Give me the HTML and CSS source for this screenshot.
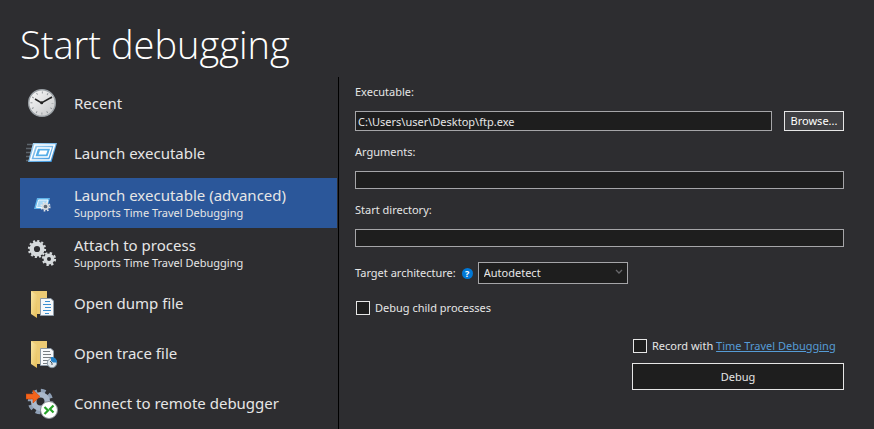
FILE: index.html
```html
<!DOCTYPE html>
<html lang="en">
<head>
<meta charset="utf-8">
<meta name="viewport" content="width=device-width, initial-scale=1">
<title>Start debugging</title>
<link rel="stylesheet" href="styles.css">
</head>
<body>
<svg class="defs" aria-hidden="true">
  <defs>
    <linearGradient id="face" x1="0" y1="0" x2="1" y2="1"><stop offset="0" stop-color="#fafafa"/><stop offset="1" stop-color="#c4c6c8"/></linearGradient>
    <linearGradient id="pane" x1="0" y1="0" x2="1" y2="1"><stop offset="0" stop-color="#b4dcf5"/><stop offset="1" stop-color="#2d8ddb"/></linearGradient>
    <linearGradient id="fold" x1="0" y1="0" x2="1" y2="1"><stop offset="0" stop-color="#fbe7a6"/><stop offset="1" stop-color="#e6bd58"/></linearGradient>
    <g id="folder">
      <path d="M5 4H21V27H9Z" fill="#edcb74"/>
      <path d="M5 4L11 8V31L5 27Z" fill="url(#fold)"/>
    </g>
    <path id="page" d="M14.500 11.500H25L27.500 14V28.500H14.500Z" fill="#f6f8fa" stroke="#8d9ba8"/>
  </defs>
</svg>
<header class="top"><h1>Start debugging</h1></header>
<main class="layout">
  <nav class="modes" aria-label="Debugging modes">
    <button class="mode" type="button">
      <svg class="icon" viewBox="0 0 32 32" aria-hidden="true">
        <circle cx="16" cy="16" r="13.300" fill="url(#face)" stroke="#9aa0a5" stroke-width="1.400"/>
        <circle cx="16" cy="16" r="10.500" fill="none" stroke="#8b9094" stroke-width="2" stroke-dasharray=".9 4.598" stroke-dashoffset=".45"/>
        <path d="M9 12L15.500 16L26 10" fill="none" stroke="#222" stroke-width="1.500"/>
        <circle cx="15.700" cy="15.800" r="1.500" fill="#222"/>
      </svg>
      <span class="text"><span class="name">Recent</span></span>
    </button>
    <button class="mode" type="button">
      <svg class="icon" viewBox="0 0 32 32" aria-hidden="true">
        <path d="M1 7.500H8M0 11.500H6M0 15.500H5M0 19.500H4M0 23.500H3" stroke="#5d656c" stroke-width="1.400"/>
        <path d="M7 6H31L25.500 25H2Z" fill="url(#pane)"/>
        <path d="M9 8H28.500L24 23H4.500Z" fill="none" stroke="#fff" stroke-width="1.500"/>
        <path d="M11.500 11H25L22 20H8.500Z" fill="#56aee8" stroke="#fff" stroke-width="1.400"/>
        <path d="M14 13.500H21.500L20 17.500H12.500Z" fill="#fff"/>
      </svg>
      <span class="text"><span class="name">Launch executable</span></span>
    </button>
    <button class="mode selected" type="button" aria-current="true">
      <svg class="icon" viewBox="0 0 32 32" aria-hidden="true">
        <path d="M11 11H24L21 22H8Z" fill="#5fb3ea"/>
        <path d="M12.500 13H22L20 20.500H10.500Z" fill="#a6d7f6" stroke="#eef8ff"/>
        <circle cx="19.500" cy="19.500" r="4.200" fill="none" stroke="#e4e6e8" stroke-width="1.800" stroke-dasharray="1.650"/>
        <circle cx="19.500" cy="19.500" r="2.700" fill="#5e6b78" stroke="#d8dcdf" stroke-width="1.700"/>
      </svg>
      <span class="text"><span class="name">Launch executable (advanced)</span><span class="note">Supports Time Travel Debugging</span></span>
    </button>
    <button class="mode" type="button">
      <svg class="icon" viewBox="0 0 32 32" aria-hidden="true">
        <g fill="none" stroke="#d6dadc">
          <circle cx="11" cy="12" r="8" stroke-width="2.200" stroke-dasharray="2.094"/>
          <circle cx="11" cy="12" r="5.300" stroke-width="4.400"/>
          <circle cx="23" cy="22" r="6" stroke-width="2.200" stroke-dasharray="2.356"/>
          <circle cx="23" cy="22" r="3.700" stroke-width="3.400"/>
        </g>
      </svg>
      <span class="text"><span class="name">Attach to process</span><span class="note">Supports Time Travel Debugging</span></span>
    </button>
    <button class="mode" type="button">
      <svg class="icon" viewBox="0 0 32 32" aria-hidden="true">
        <use href="#folder"/><use href="#page"/>
        <path d="M19 14.500H24M17 17.500H25M19 20.500H25M17 23.500H25M19 26.500H23" stroke="#3b8fd0"/>
      </svg>
      <span class="text"><span class="name">Open dump file</span></span>
    </button>
    <button class="mode" type="button">
      <svg class="icon" viewBox="0 0 32 32" aria-hidden="true">
        <use href="#folder"/><use href="#page"/>
        <path d="M17 14.500H24M17 17.500H25M17 20.500H25M17 23.500H22M17 26.500H21" stroke="#777d82"/>
        <circle cx="26" cy="26" r="4.700" fill="#dfe7ec" stroke="#8797a3"/>
        <path d="M25 20C28.500 19.500 31 22 31 25.500H27L25 24Z" fill="#2583c9"/>
        <path d="M24 24L26 26V28" fill="none" stroke="#46525c"/>
      </svg>
      <span class="text"><span class="name">Open trace file</span></span>
    </button>
    <button class="mode" type="button">
      <svg class="icon" viewBox="0 0 32 32" aria-hidden="true">
        <circle cx="14.500" cy="14.500" r="10.500" fill="none" stroke="#8fa0b6" stroke-width="4.500" stroke-dasharray="4.600 3.647"/>
        <circle cx="14.500" cy="14.500" r="6.800" fill="none" stroke="#a9b8cb" stroke-width="5.600"/>
        <path d="M0 7H7V3L14 9.500L7 16V12H0Z" fill="#f4641c" stroke="#c94508" stroke-width=".6"/>
        <circle cx="23" cy="23" r="8.500" fill="#fff" stroke="#888e94"/>
        <path d="M18.500 20L22 23.500L18.500 27M27.500 18.500L24 22L27.500 25.500" fill="none" stroke="#27a329" stroke-width="2.200"/>
      </svg>
      <span class="text"><span class="name">Connect to remote debugger</span></span>
    </button>
  </nav>
  <form class="panel">
    <div class="field">
      <label for="exe">Executable:</label>
      <div class="row">
        <input class="box tall" id="exe" type="text" value="C:\Users\user\Desktop\ftp.exe">
        <button class="browse" type="button">Browse...</button>
      </div>
    </div>
    <div class="field">
      <label for="args">Arguments:</label>
      <input class="box" id="args" type="text">
    </div>
    <div class="field">
      <label for="dir">Start directory:</label>
      <input class="box" id="dir" type="text">
    </div>
    <div class="arch">
      <label for="arch">Target architecture:</label>
      <button class="help" type="button" aria-label="Help">?</button>
      <div class="picker">
        <select id="arch"><option>Autodetect</option></select>
        <svg class="chevron" viewBox="0 0 8 6" aria-hidden="true"><path d="M1 1L4 4L7 1" fill="none" stroke="#68686b" stroke-width="1.300"/></svg>
      </div>
    </div>
    <div class="check">
      <input id="child" type="checkbox"><label for="child">Debug child processes</label>
    </div>
    <div class="actions">
      <div class="check">
        <input id="record" type="checkbox"><span><label for="record">Record with</label> <a href="#">Time Travel Debugging</a></span>
      </div>
      <button class="debug" type="submit">Debug</button>
    </div>
  </form>
</main>
</body>
</html>
```
FILE: styles.css
```css
* { box-sizing: border-box; }

body {
  margin: 0;
  min-height: 100vh;
  display: flex;
  flex-direction: column;
  background: #2d2d30;
  color: #e6e6e6;
  font: 11px/16px "Noto Sans", "Open Sans", sans-serif;
}

button, input, select { font: inherit; color: inherit; border-radius: 0; }

.defs { position: absolute; width: 0; height: 0; }

.top { padding: 16px 20px 5px; }

h1 {
  margin: 0;
  font: 300 38px/56px "Open Sans", "Noto Sans", sans-serif;
  color: #fff;
}

.layout {
  flex: 1;
  display: grid;
  grid-template-columns: 339px 1fr;
}

.modes {
  padding: 1px 1px 0 20px;
  border-right: 1px solid #000;
}

.mode {
  display: flex;
  align-items: center;
  gap: 16px;
  width: 100%;
  height: 50px;
  padding: 0 6px;
  border: 0;
  background: none;
  text-align: left;
}

.selected { background: #2b579a; }

.icon { width: 32px; height: 32px; flex: none; }

.text { display: flex; flex-direction: column; white-space: nowrap; }

.name { font-size: 15px; line-height: 20px; }

.note { line-height: 16px; }

.panel {
  display: flex;
  flex-direction: column;
  padding: 7px 30px 0 16px;
}

.field { display: flex; flex-direction: column; gap: 11px; margin-bottom: 13px; }

.row { display: flex; gap: 12px; }

.box {
  width: 100%;
  min-width: 0;
  height: 18px;
  padding: 0 2px;
  border: 1px solid #a5a5a8;
  background: #1e1e1e;
  outline: 0;
}

.tall { flex: 1; height: 20px; }

.browse {
  width: 60px;
  height: 20px;
  padding: 0;
  border: 1px solid #e6e6e6;
  background: #3f3f42;
  color: #fff;
  line-height: 18px;
}

.arch { display: flex; align-items: center; margin-top: 2px; }

.help {
  width: 11px;
  height: 11px;
  margin: 0 5px 0 6px;
  padding: 0;
  border: 0;
  border-radius: 50%;
  background: #0078d7;
  color: #fff;
  font-size: 9px;
  font-weight: 700;
  line-height: 11px;
}

.picker { position: relative; width: 150px; }

select {
  display: block;
  appearance: none;
  width: 100%;
  height: 22px;
  padding: 0 5px;
  border: 1px solid #a5a5a8;
  background: #1e1e1e;
}

.chevron { position: absolute; top: 7px; right: 5px; width: 8px; height: 6px; }

.check { display: flex; align-items: center; gap: 5px; margin: 16px 0 0 1px; }

.check input {
  appearance: none;
  flex: none;
  width: 14px;
  height: 14px;
  margin: 0;
  border: 1px solid #e6e6e6;
  background: #1e1e1e;
}

.check input:checked { background: #0078d7; }

.actions { align-self: flex-end; width: 212px; margin-top: 6px; white-space: nowrap; }

a { color: #569cd6; }

.debug {
  width: 100%;
  height: 27px;
  margin-top: 9px;
  padding: 0;
  border: 1px solid #e6e6e6;
  background: #1e1e1e;
}
```
